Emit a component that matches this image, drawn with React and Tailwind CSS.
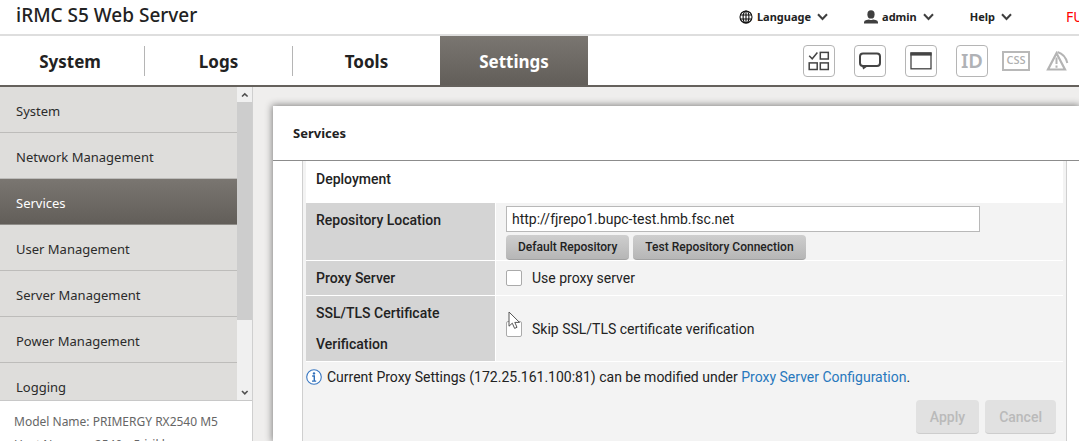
import React from "react";

const tabs = ["System", "Logs", "Tools", "Settings"];
const sections = [
  "System",
  "Network Management",
  "Services",
  "User Management",
  "Server Management",
  "Power Management",
  "Logging",
];

function Chevron() {
  return (
    <svg width="11" height="8" viewBox="0 0 11 8" fill="none" aria-hidden="true">
      <path d="M1 1.2 L5.5 6 L10 1.2" stroke="#3f3f3f" strokeWidth="2" />
    </svg>
  );
}

function MenuButton({ icon, children }) {
  return (
    <button type="button" className="flex items-center gap-1 text-[11px] font-bold text-[#222]">
      {icon}
      <span>{children}</span>
      <span className="pl-0.5">
        <Chevron />
      </span>
    </button>
  );
}

function GlobeIcon() {
  return (
    <svg width="14" height="14" viewBox="0 0 14 14" fill="none" stroke="#111" strokeWidth="1.1" aria-hidden="true">
      <circle cx="7" cy="7" r="6" />
      <ellipse cx="7" cy="7" rx="2.9" ry="6" />
      <path d="M7 1V13M1.4 5H12.6M1.4 9H12.6" />
    </svg>
  );
}

function UserIcon() {
  return (
    <svg width="14" height="14" viewBox="0 0 14 14" fill="#3f3f3f" aria-hidden="true">
      <ellipse cx="7" cy="4.4" rx="3.6" ry="4.2" />
      <path d="M0 13.5V12.2Q0 10.4 2.5 10L5 9.4Q7 10.6 9 9.4L11.5 10Q14 10.4 14 12.2V13.5Z" />
    </svg>
  );
}

function ToolButton({ label, children }) {
  return (
    <button
      type="button"
      aria-label={label}
      className="flex h-8 w-8 items-center justify-center rounded border border-[#b5b5b5] bg-white"
    >
      {children}
    </button>
  );
}

function Toolbar() {
  return (
    <div className="ml-auto flex items-center gap-[19px] pr-2.5">
      <ToolButton label="Tasks">
        <svg width="22" height="20" viewBox="0 0 22 20" fill="none" stroke="#444" strokeWidth="1.5">
          <path d="M1.2 4.8L4.2 7.8L9.4 1.6" />
          <rect x="12.3" y="1.4" width="8" height="6.6" />
          <rect x="1.2" y="11.9" width="8" height="6.6" />
          <rect x="12.3" y="11.9" width="8" height="6.6" />
        </svg>
      </ToolButton>
      <ToolButton label="Messages">
        <svg width="24" height="20" viewBox="0 0 24 20" fill="none">
          <rect x="2" y="2.5" width="20" height="12.5" rx="3" stroke="#444" strokeWidth="2" />
          <path d="M4 15L5.2 18.6L10 15Z" fill="#444" />
        </svg>
      </ToolButton>
      <ToolButton label="Console">
        <svg width="22" height="18" viewBox="0 0 22 18" fill="none">
          <rect x="1" y="1" width="20" height="15.8" stroke="#444" strokeWidth="1.3" />
          <rect x="0.4" y="0.4" width="21.2" height="3.2" fill="#444" />
        </svg>
      </ToolButton>
      <ToolButton label="Identification LED">
        <span className="font-['Noto_Sans',sans-serif] text-xl font-semibold text-[#b0b2b6]">ID</span>
      </ToolButton>
      <div className="-ml-1.5 flex items-center gap-4 pl-px">
        <button
          type="button"
          className="flex h-5 w-7 items-center justify-center border-2 border-[#b8b8b8] font-['Open_Sans',sans-serif] text-[11px] font-semibold text-[#b0b0b0]"
        >
          CSS
        </button>
        <button type="button" aria-label="Global error">
          <svg width="23" height="20" viewBox="0 0 23 20" fill="none" stroke="#b4b4b4">
            <path d="M10.5 2.2L19 18.5H2Z" strokeWidth="2.2" />
            <path d="M10.5 6.5V13M10.5 14.6V16.8" strokeWidth="2" />
            <path d="M11.5 1C16.5 2.5 19.8 6 21.3 12" strokeWidth="2" />
          </svg>
        </button>
      </div>
    </div>
  );
}

function ScrollArrow({ d }) {
  return (
    <svg width="15" height="15" viewBox="0 0 15 15" fill="none" className="shrink-0" aria-hidden="true">
      <path d={d} stroke="#505050" strokeWidth="1.6" />
    </svg>
  );
}

function Sidebar() {
  return (
    <aside className="flex w-[253px] shrink-0 flex-col border-r border-[#cfcfcf]">
      <div className="flex min-h-0 flex-1 border-b border-[#c8c8c8]">
        <nav className="flex min-w-0 flex-1 flex-col overflow-hidden bg-[#dedddb]">
          {sections.map((name) => (
            <a
              key={name}
              href="#"
              aria-current={name === "Services" ? "page" : undefined}
              className={
                "flex h-[46px] shrink-0 items-center border-b px-4 pt-1 text-[13px] " +
                (name === "Services"
                  ? "border-[#8f8d89] bg-linear-to-b from-[#7a7671] to-[#625e59] text-white"
                  : "border-[#bdbcba] text-[#2b2b2b]")
              }
            >
              {name}
            </a>
          ))}
        </nav>
        <div className="flex w-[15px] flex-col bg-[#f0f0f0]">
          <ScrollArrow d="M5 9.5L7.8 6.8L10.6 9.5" />
          <div className="flex-[218] bg-[#cdcdcd]" />
          <div className="flex-[65]" />
          <ScrollArrow d="M5 6L7.8 8.8L10.6 6" />
        </div>
      </div>
      <div className="h-10 shrink-0 overflow-hidden bg-white px-3.5 pt-[9px] text-xs leading-[23px] text-[#666]">
        <p>Model Name: PRIMERGY RX2540 M5</p>
        <p>Host Name: rx2540m5-irikl</p>
      </div>
    </aside>
  );
}

const labelCell =
  "w-[190px] border-r border-b border-white bg-[#d4d4d4] px-2.5 pt-0.5 pb-px text-left align-top font-medium leading-[31px]";
const valueCell = "border-b border-white px-2.5";
const smallButton =
  "h-[25px] rounded border-b border-[#a2a2a2] bg-linear-to-b from-[#cecece] to-[#b6b6b6] px-3 text-xs font-medium text-[#222]";
const check = "h-4 w-4 shrink-0 appearance-none rounded-xs border border-[#aaa] bg-white";

function Pointer() {
  return (
    <svg width="14" height="20" viewBox="0 0 14 20" className="absolute -top-2 left-0.5" aria-hidden="true">
      <path d="M1 1V15.2L4.3 12.2L6.6 17.4L9 16.3L6.8 11.4H11.5Z" fill="#fff" stroke="#555" />
    </svg>
  );
}

function Deployment() {
  return (
    <section className="mr-3 ml-[29px] min-h-0 flex-1 overflow-hidden border-x border-[#cfcfcf] bg-[#f3f3f3] px-[3px] font-[Roboto,sans-serif] text-sm text-[#222]">
      <h2 className="bg-white px-2.5 pt-0.5 pb-2 leading-8 font-medium">Deployment</h2>
      <table className="w-full border-separate border-spacing-0">
        <tbody>
          <tr>
            <th scope="row" className={labelCell}>
              <label htmlFor="repo">Repository Location</label>
            </th>
            <td className={valueCell + " pt-[3px] align-top"}>
              <input
                id="repo"
                type="text"
                defaultValue="http://fjrepo1.bupc-test.hmb.fsc.net"
                className="block h-[26px] w-[474px] max-w-full border border-[#b8b8b8] bg-white px-[5px]"
              />
              <div className="mt-[3px] flex gap-1">
                <button type="button" className={smallButton}>Default Repository</button>
                <button type="button" className={smallButton}>Test Repository Connection</button>
              </div>
            </td>
          </tr>
          <tr>
            <th scope="row" className={labelCell}>Proxy Server</th>
            <td className={valueCell}>
              <label className="flex items-center gap-2.5">
                <input type="checkbox" className={check} />
                Use proxy server
              </label>
            </td>
          </tr>
          <tr>
            <th scope="row" className={labelCell}>SSL/TLS Certificate Verification</th>
            <td className={valueCell}>
              <label className="relative flex items-center gap-2.5">
                <input type="checkbox" className={check} />
                Skip SSL/TLS certificate verification
                <Pointer />
              </label>
            </td>
          </tr>
        </tbody>
      </table>
      <p className="flex items-center gap-[5px] pt-[3px] leading-6">
        <svg width="16" height="16" viewBox="0 0 16 16" fill="none" aria-hidden="true">
          <circle cx="8" cy="8" r="7.3" fill="#fff" stroke="#3a78c2" strokeWidth="1.1" />
          <circle cx="8" cy="4.4" r="1.2" fill="#2f6fba" />
          <path d="M6.2 7H8.3V12M6 12.1H10.2" stroke="#2f6fba" strokeWidth="1.4" />
        </svg>
        <span>
          Current Proxy Settings (172.25.161.100:81) can be modified under{" "}
          <a href="#" className="text-[#2878bd]">Proxy Server Configuration</a>.
        </span>
      </p>
      <div className="flex justify-end gap-1.5 pt-[11px] pr-[7px]">
        {["Apply", "Cancel"].map((name) => (
          <button
            key={name}
            type="button"
            disabled
            className="h-[34px] rounded border-b border-[#cdcdcd] bg-[#e1e1e1] px-3.5 font-medium text-[#bababa]"
          >
            {name}
          </button>
        ))}
      </div>
    </section>
  );
}

export default function App() {
  return (
    <div className="flex h-screen flex-col overflow-hidden bg-[#efeeed] font-['Noto_Sans',sans-serif] text-[#222]">
      <header className="flex h-9 shrink-0 items-center border-b-2 border-[#dedede] bg-white pl-4 whitespace-nowrap">
        <h1 className="pb-1 text-[19px] font-medium">iRMC S5 Web Server</h1>
        <div className="ml-auto flex items-center">
          <MenuButton icon={<GlobeIcon />}>Language</MenuButton>
          <div className="pl-9">
            <MenuButton icon={<UserIcon />}>admin</MenuButton>
          </div>
          <div className="pl-9">
            <MenuButton>Help</MenuButton>
          </div>
          <div className="ml-[54px] w-[13px] overflow-hidden text-sm text-[#f00]">FU</div>
        </div>
      </header>
      <div className="flex h-[51px] shrink-0 border-b-2 border-[#65615c] bg-white">
        <nav className="flex">
          {tabs.map((name, i) => (
            <a
              key={name}
              href="#"
              className={
                "flex items-center text-[17px] font-bold " +
                (i === 0 ? "w-36" : "w-[148px]") +
                (name === "Settings" ? " bg-linear-to-b from-[#7a7671] to-[#625e59] text-white" : "")
              }
            >
              <span
                className={
                  "flex h-[30px] flex-1 items-center justify-center pt-0.5 " +
                  (i === 0 ? "pr-1" : i < 3 ? "border-l border-[#b5b5b5]" : "")
                }
              >
                {name}
              </span>
            </a>
          ))}
        </nav>
        <Toolbar />
      </div>
      <div className="flex min-h-0 flex-1">
        <Sidebar />
        <main className="flex min-w-0 flex-1 flex-col pt-[19px] pl-5">
          <div className="flex min-h-0 flex-1 flex-col bg-white shadow-[0_0_7px_1px_rgba(0,0,0,0.45)]">
            <h2 className="flex h-[55px] shrink-0 items-center border-b border-[#8c8c8c] px-5 pt-0.5 text-[13px] font-bold">
              Services
            </h2>
            <Deployment />
          </div>
        </main>
      </div>
    </div>
  );
}
